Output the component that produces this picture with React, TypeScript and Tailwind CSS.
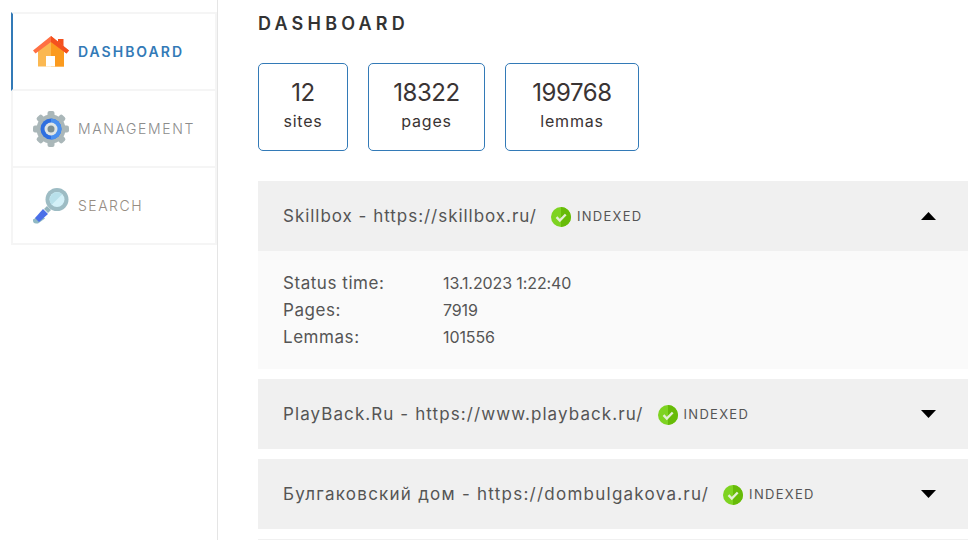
const font = "font-['Inter','Liberation_Sans',sans-serif]";

function HomeIcon() {
  return (
    <svg width="36" height="31" viewBox="0 0 36 31">
      <path d="M5 14 18 4l13 10v16.500H5z" fill="#fbb851" />
      <path d="M18 4l13 10v16.500H18z" fill="#fb9a1e" />
      <path d="M13 30.500V20h9v10.500z" fill="#fff" />
      <path d="M25 3h5.500v9L25 8z" fill="#f4511e" />
      <path d="M0 14.500 18 0l18 14.500-2.500 3L18 6 2.500 17.500z" fill="#ff7043" />
      <path d="M18 0l18 14.500-2.500 3L18 6z" fill="#f4511e" />
    </svg>
  );
}

function GearIcon() {
  return (
    <svg width="36" height="36" viewBox="0 0 36 36">
      <g fill="#aab7b9">
        <circle cx="18" cy="18" r="14.500" />
        <rect x="14.500" y="0" width="7" height="36" rx="2" />
        <rect x="14.500" y="0" width="7" height="36" rx="2" transform="rotate(45 18 18)" />
        <rect x="14.500" y="0" width="7" height="36" rx="2" transform="rotate(90 18 18)" />
        <rect x="14.500" y="0" width="7" height="36" rx="2" transform="rotate(135 18 18)" />
      </g>
      <circle cx="18" cy="18" r="10.500" fill="#2f6fe0" />
      <path d="M18 7.500a10.500 10.500 0 0 1 0 21z" fill="#4a90f0" />
      <circle cx="18" cy="18" r="6.500" fill="#dfe5e6" />
      <circle cx="18" cy="18" r="3.500" fill="#7d8e91" />
    </svg>
  );
}

function SearchIcon() {
  return (
    <svg width="36" height="36" viewBox="0 0 36 36">
      <path d="M8 26.500l4 4-7 5H3a3 3 0 0 1-3-3v-1z" fill="#8fb8c4" />
      <path d="M10 21l5 5-9 8-4-4z" fill="#4a6fe8" />
      <path d="M14 18l4 4-3 3-4-4z" fill="#94b4bd" />
      <circle cx="24" cy="11.500" r="11.500" fill="#9dbcc4" />
      <circle cx="24" cy="11.500" r="7.500" fill="#d3f0f8" />
      <path d="M18.700 16.800A7.500 7.500 0 0 1 29.300 6.200z" fill="#b8e0ea" />
    </svg>
  );
}

function CheckBadge() {
  return (
    <svg width="20" height="20" viewBox="0 0 20 20" className="shrink-0">
      <circle cx="10" cy="10" r="10" fill="#7ed321" />
      <path d="M10 0a10 10 0 0 1 0 20z" fill="#67bb08" />
      <path d="M5.500 10.200 8.800 13.500 14.700 7.500" fill="none" stroke="#e4efd6" strokeWidth="2.400" />
    </svg>
  );
}

function Arrow({ up }: { up?: boolean }) {
  return (
    <svg width="15" height="8" viewBox="0 0 15 8" className="mr-[32px] shrink-0">
      <path d={up ? "M7.500 0 15 8H0z" : "M0 0h15L7.500 8z"} fill="#000" />
    </svg>
  );
}

function NavItem({ icon, label, className, textClass }: { icon: React.ReactNode; label: string; className: string; textClass: string }) {
  return (
    <a className={`flex items-center border-2 border-t-0 border-[#f5f5f5] ${className}`}>
      <span className="flex w-[56px] shrink-0 justify-end">{icon}</span>
      <span className={`ml-[9px] text-[14px] ${textClass}`}>{label}</span>
    </a>
  );
}

function Stat({ value, label, width }: { value: string; label: string; width: string }) {
  return (
    <div className={`flex h-[88px] flex-col items-center rounded-[5px] border border-[#337ab7] pt-[13px] text-[#3a3434] ${width}`}>
      <div className="text-[24px] leading-[32px] tracking-[-0.4px]">{value}</div>
      <div className="text-[16px] leading-[24px] tracking-[0.8px]">{label}</div>
    </div>
  );
}

function Detail({ label, value }: { label: string; value: string }) {
  return (
    <div className="flex h-[27px] items-baseline">
      <span className="w-[160px] text-[17px] tracking-[0.55px]">{label}</span>
      <span className="tracking-[-0.1px]">{value}</span>
    </div>
  );
}

function SiteRow({ title, tracking, open }: { title: string; tracking: string; open?: boolean }) {
  return (
    <div className="bg-[#f0f0f0]">
      <div className="flex h-[70px] items-center pl-[25px] text-[#555]">
        <span className={`mt-[1px] text-[17px] ${tracking}`}>{title}</span>
        <span className="ml-[14px] mt-[1px]"><CheckBadge /></span>
        <span className="ml-[6px] mt-[2px] text-[13px] tracking-[1.3px]">INDEXED</span>
        <span className="flex-1" />
        <Arrow up={open} />
      </div>
      {open && (
        <div className="h-[118px] bg-[#fafafa] pl-[25px] pt-[19px] text-[16px] leading-[27px] text-[#555]">
          <Detail label="Status time:" value="13.1.2023 1:22:40" />
          <Detail label="Pages:" value="7919" />
          <Detail label="Lemmas:" value="101556" />
        </div>
      )}
    </div>
  );
}

export default function App() {
  return (
    <div className={`flex h-[540px] overflow-hidden bg-white ${font}`}>
      <aside className="w-[218px] shrink-0 border-r border-[#e5e5e5] pl-[11px] pt-[12px]">
        <nav className="flex w-[206px] flex-col">
          <NavItem
            icon={<HomeIcon />}
            label="DASHBOARD"
            className="h-[79px] border-t-2 border-l-[#337ab7]"
            textClass="font-semibold tracking-[2px] text-[#337ab7]"
          />
          <NavItem
            icon={<GearIcon />}
            label="MANAGEMENT"
            className="h-[77px]"
            textClass="font-light tracking-[1.6px] text-[#8c8c8c]"
          />
          <NavItem
            icon={<SearchIcon />}
            label="SEARCH"
            className="h-[77px]"
            textClass="font-light tracking-[1.5px] text-[#968c82]"
          />
        </nav>
      </aside>
      <main className="flex-1 pl-[40px] pr-[10px]">
        <h1 className="mt-[12px] text-[18px] font-semibold leading-[24px] tracking-[4.2px] text-[#333]">DASHBOARD</h1>
        <div className="mt-[27px] flex gap-[20px]">
          <Stat value="12" label="sites" width="w-[90px]" />
          <Stat value="18322" label="pages" width="w-[117px]" />
          <Stat value="199768" label="lemmas" width="w-[134px]" />
        </div>
        <div className="mt-[30px] flex flex-col gap-[10px]">
          <SiteRow title="Skillbox - https://skillbox.ru/" tracking="tracking-[0.97px]" open />
          <SiteRow title="PlayBack.Ru - https://www.playback.ru/" tracking="tracking-[1.09px]" />
          <SiteRow title="Булгаковский дом - https://dombulgakova.ru/" tracking="tracking-[1.25px]" />
          <div className="h-[70px] bg-[#f0f0f0]" />
        </div>
      </main>
    </div>
  );
}
